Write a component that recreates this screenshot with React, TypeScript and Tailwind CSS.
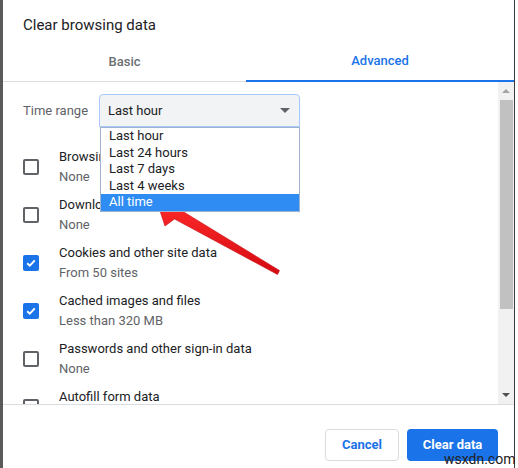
import React from "react"

const rows = [
  { title: "Browsing history", sub: "None", checked: false },
  { title: "Download history", sub: "None", checked: false },
  { title: "Cookies and other site data", sub: "From 50 sites", checked: true },
  { title: "Cached images and files", sub: "Less than 320 MB", checked: true },
  { title: "Passwords and other sign-in data", sub: "None", checked: false },
  { title: "Autofill form data", sub: "", checked: false },
]

const options = ["Last hour", "Last 24 hours", "Last 7 days", "Last 4 weeks", "All time"]

function Checkbox({ checked }: { checked: boolean }) {
  if (checked) {
    return (
      <div className="w-4 h-4 shrink-0 rounded-[2px] bg-[#1a73e8] flex items-center justify-center">
        <svg width="12" height="12" viewBox="0 0 12 12">
          <path d="M2.2 6.2 L4.8 8.7 L9.8 3.4" fill="none" stroke="white" strokeWidth="1.9" />
        </svg>
      </div>
    )
  }
  return <div className="w-4 h-4 shrink-0 rounded-[2px] border-2 border-[#5f6368] bg-white" />
}

export default function App() {
  return (
    <div
      className="relative w-[518px] h-[468px] overflow-hidden bg-white flex"
      style={{ fontFamily: "Roboto, 'Liberation Sans', Arial, sans-serif" }}
    >
      <div className="w-[3px] h-full bg-[#5a5a5a] shrink-0" />

      <div className="w-[511px] h-full shrink-0 bg-white rounded-t-[6px] flex flex-col">
        {/* header */}
        <div className="h-[42px] pt-[15px] pl-5 text-[15px] leading-5 text-[#202124]">Clear browsing data</div>

        {/* tabs */}
        <div className="h-[40px] flex border-b border-[#dadce0]">
          <div className="w-[243px] flex items-center justify-center text-[13px] font-medium text-[#6b6f74]">Basic</div>
          <div className="flex-1 flex items-center justify-center text-[13px] font-medium text-[#1a73e8] border-b-2 border-[#1a73e8] mb-[-1px]">
            Advanced
          </div>
        </div>

        {/* body */}
        <div className="h-[323px] flex border-b border-[#dadce0]">
          <div className="flex-1 pl-5 pt-3 overflow-hidden">
            <div className="h-[33px] flex items-center">
              <div className="w-[76px] text-[13px] text-[#5f6368]">Time range</div>
              <div className="relative w-[201px] h-[33px]">
                <div className="h-full bg-[#f1f3f4] rounded-t-[4px] border border-[#a8c7fa] flex items-center justify-between pl-2 pr-[9px] text-[13px] text-[#202124]">
                  <span>Last hour</span>
                  <svg width="10" height="5" viewBox="0 0 10 5">
                    <path d="M0 0 L10 0 L5 5 Z" fill="#5f6368" />
                  </svg>
                </div>
                <div className="absolute left-px top-[33px] w-[200px] bg-white border border-[#9fb3d1] z-10 flex flex-col">
                  {options.map((o, i) => (
                    <div
                      key={o}
                      className={
                        i === options.length - 1
                          ? "h-[16.6px] leading-[16.6px] pl-[8px] text-[13px] bg-[#2f8cf2] text-white"
                          : "h-[16.6px] leading-[16.6px] pl-[8px] text-[13px] text-[#202124]"
                      }
                    >
                      {o}
                    </div>
                  ))}
                </div>
              </div>
            </div>

            <div className="mt-4 flex flex-col">
              {rows.map((r) => (
                <div key={r.title} className="h-12 flex items-center gap-5">
                  <Checkbox checked={r.checked} />
                  <div className="flex flex-col text-[13px] leading-5">
                    <span className="text-[#202124]">{r.title}</span>
                    <span className="text-[#5f6368]">{r.sub || "\u00a0"}</span>
                  </div>
                </div>
              ))}
            </div>
          </div>

          {/* scrollbar */}
          <div className="w-4 h-full bg-[#f1f1f1] flex flex-col items-center">
            <div className="h-[18px] flex items-center justify-center">
              <svg width="8" height="4" viewBox="0 0 8 4">
                <path d="M0 4 L8 4 L4 0 Z" fill="#a3a3a3" />
              </svg>
            </div>
            <div className="w-[13px] h-[209px] bg-[#c1c1c1]" />
            <div className="flex-1" />
            <div className="h-[18px] flex items-center justify-center">
              <svg width="8" height="4" viewBox="0 0 8 4">
                <path d="M0 0 L8 0 L4 4 Z" fill="#505050" />
              </svg>
            </div>
          </div>
        </div>

        {/* footer */}
        <div className="flex justify-end gap-2 pt-6 pr-4">
          <button className="w-[74px] h-8 rounded-[4px] border border-[#dadce0] bg-white text-[13px] font-bold text-[#1a73e8]">
            Cancel
          </button>
          <button className="w-[91px] h-8 rounded-[4px] bg-[#1a73e8] text-[13px] font-bold text-white">Clear data</button>
        </div>
      </div>

      <div className="w-px h-full bg-[#3c3c3c] shrink-0" />

      {/* arrow */}
      <svg className="absolute left-0 top-0 pointer-events-none" width="518" height="468">
        <defs>
          <linearGradient id="arrowFill" x1="0" y1="0" x2="0" y2="1">
            <stop offset="0" stopColor="#ff2a2a" />
            <stop offset="1" stopColor="#d40b12" />
          </linearGradient>
        </defs>
        <polygon
          points="157,202 184,203 180.5,210 279.5,270.5 277.5,274.5 174.5,219 165,226"
          fill="url(#arrowFill)"
          stroke="#c80d14"
          strokeWidth="0.6"
          strokeLinejoin="round"
        />
      </svg>

      <div className="absolute left-[444px] top-[449px] text-[14px] leading-5 text-[#222]">wsxdn.com</div>
    </div>
  )
}
